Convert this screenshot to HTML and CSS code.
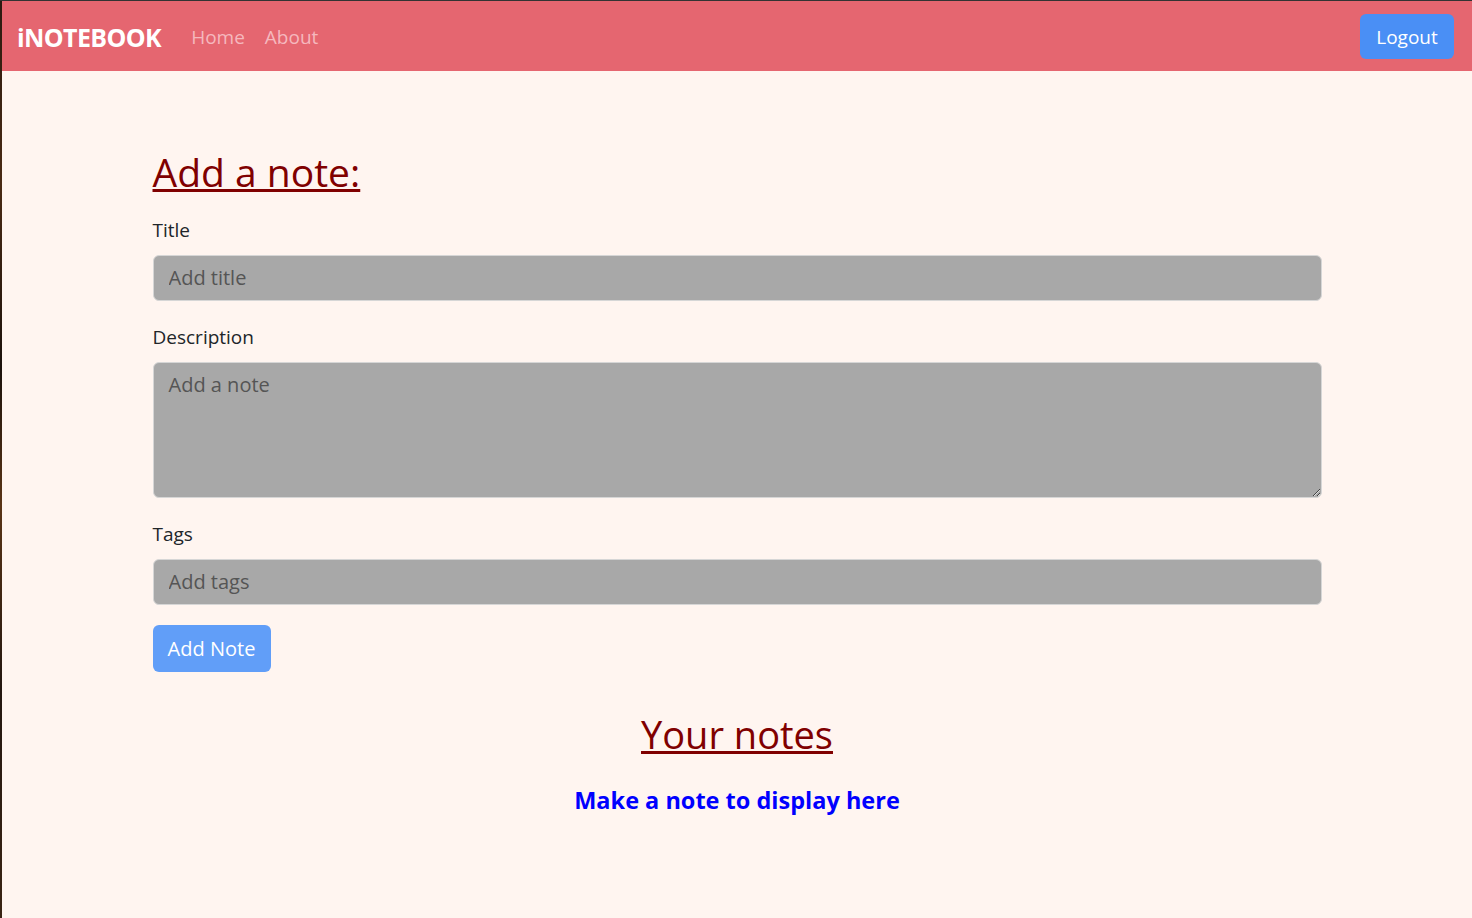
FILE: index.html
```html
<!DOCTYPE html>
<html lang="en">
<head>
<meta charset="utf-8">
<title>iNotebook</title>
<link rel="stylesheet" href="styles.css">
</head>
<body>
<div class="frame">
  <div class="edge"></div>
  <div class="page">
    <nav class="navbar">
      <div class="nav-left">
        <span class="brand">iNOTEBOOK</span>
        <a class="nav-link">Home</a>
        <a class="nav-link">About</a>
      </div>
      <button class="btn btn-logout">Logout</button>
    </nav>
    <main class="container">
      <h1 class="heading">Add a note:</h1>
      <form class="note-form">
        <label class="label" for="title">Title</label>
        <input class="control" id="title" type="text" placeholder="Add title">
        <label class="label" for="desc">Description</label>
        <textarea class="control area" id="desc" placeholder="Add a note"></textarea>
        <label class="label" for="tags">Tags</label>
        <input class="control" id="tags" type="text" placeholder="Add tags">
        <div><button type="button" class="btn btn-add">Add Note</button></div>
      </form>
      <h2 class="heading center">Your notes</h2>
      <p class="empty">Make a note to display here</p>
    </main>
  </div>
</div>
</body>
</html>
```
FILE: styles.css
```css
* { box-sizing: border-box; }
html, body { margin: 0; height: 100%; }
body {
  font-family: "Open Sans", "Noto Sans", sans-serif;
  background: #333;
  color: #212529;
  overflow: hidden;
}
.frame {
  display: flex;
  height: 100%;
  padding-top: 1px;
}
.edge {
  width: 2px;
  flex: none;
  background: linear-gradient(180deg, #2b1a10 0%, #4a2a14 20%, #1c120c 40%, #5a3416 55%, #241710 75%, #3a2414 100%);
}
.page {
  flex: 1;
  background: #fff5f0;
}
.navbar {
  height: 70px;
  background: #e56670;
  display: flex;
  align-items: center;
  justify-content: space-between;
  padding: 1px 18px 0 15px;
}
.nav-left { display: flex; align-items: center; gap: 20px; padding-top: 1px; }
.brand {
  color: #fff;
  font-weight: 700;
  font-size: 25px;
  letter-spacing: -0.6px;
  margin-right: 10px;
}
.nav-link {
  color: #f5b8be;
  font-size: 19px;
}
.btn {
  border: 0;
  border-radius: 6px;
  color: #fff;
  font-family: inherit;
  font-size: 19px;
  cursor: pointer;
}
.btn-logout {
  background: #4a8ff5;
  width: 94px;
  height: 45px;
  padding: 1px 0 0;
  margin-top: -1px;
}
.container {
  width: 1169px;
  margin: 0 auto;
  padding-top: 78px;
}
.heading {
  color: #800000;
  text-decoration: underline;
  font-weight: 500;
  font-size: 39px;
  margin: 0 0 21px;
  line-height: 1.2;
}
.note-form { display: flex; flex-direction: column; }
.label {
  font-size: 19px;
  margin-bottom: 12px;
}
.control {
  background: #a8a8a8;
  border: 1px solid #d6d6d6;
  border-radius: 6px;
  height: 46px;
  padding: 0 15px;
  font-family: inherit;
  font-size: 20px;
  color: #333;
  margin-bottom: 23px;
}
.control::placeholder { color: #555; }
.area {
  height: 136px;
  padding-top: 8px;
  resize: vertical;
}
.btn-add {
  background: #619ef8;
  width: 118px;
  height: 47px;
  padding: 0;
  margin-top: -3px;
  font-size: 20px;
}
.center { text-align: center; margin-top: 40px; font-size: 38px; margin-bottom: 27px; }
.empty {
  text-align: center;
  color: #0000ff;
  font-weight: 700;
  font-size: 23.5px;
  margin: 0;
}
```
